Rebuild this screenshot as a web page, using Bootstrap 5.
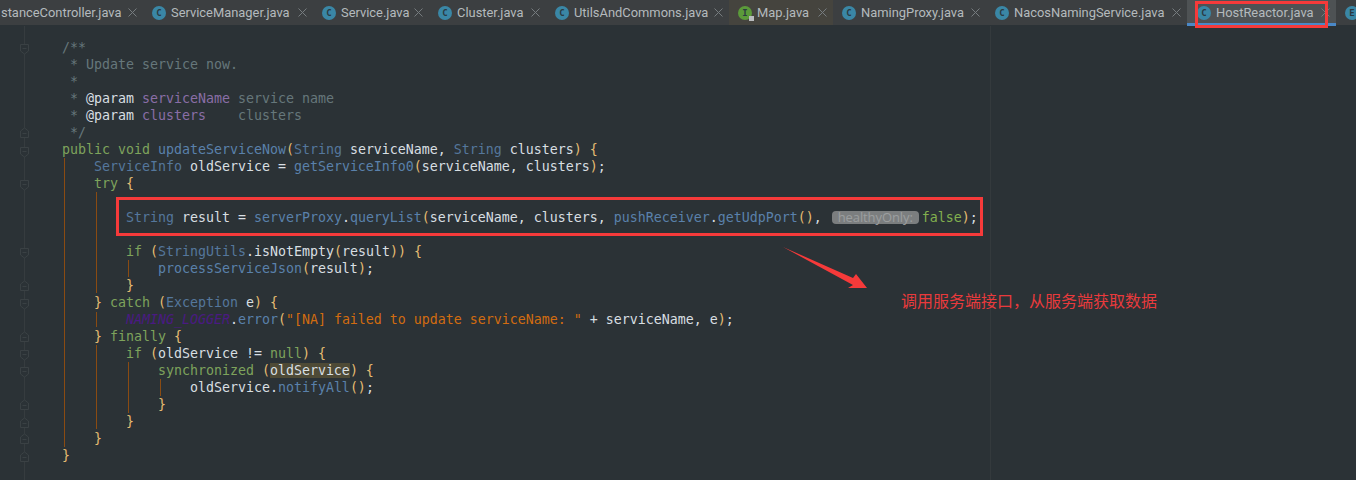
<!DOCTYPE html>
<html lang="en"><head><meta charset="utf-8">
<link href="https://cdn.jsdelivr.net/npm/bootstrap@5.3.0/dist/css/bootstrap.min.css" rel="stylesheet">
<style>
html,body{margin:0;width:1356px;height:480px;overflow:hidden;background:#2b3236}
.ide{position:relative;width:1356px;height:480px;overflow:hidden}
.tabbar{height:25px;background:#3c3f41;white-space:nowrap;font:12.9px/25px Roboto,"Noto Sans",sans-serif;color:#b4babd}
.tabx{height:25px;padding:0 6px 0 9px;flex:none}
.tabx:nth-child(1){width:143px;padding-left:1px}
.tabx:nth-child(2){width:170px}
.tabx:nth-child(3){width:116px}
.tabx:nth-child(4){width:117px}
.tabx:nth-child(5){width:183px}
.tabx:nth-child(6){width:104px}
.tabx:nth-child(7){width:153px}
.tabx:nth-child(8){width:201px}
.tabx:nth-child(9){width:149px}
.tabx:nth-child(10){width:60px}
.tabx.mapt{background:#45443e}
.tabx.act{background:#4e5254;box-shadow:inset 0 -3px 0 #4a88c7;padding-left:10px;height:26px;padding-bottom:1px}
.ico{width:14px;height:14px;flex:none;border-radius:50%;background:#3a87a6;color:#2b3a42;font:700 9px/14px "DejaVu Sans Mono",monospace;text-align:center;position:relative;margin-right:5px}
.ico.ifc{background:#5b9a3a}
.ico.ifc::after{content:"";position:absolute;right:-2px;bottom:-1px;width:5px;height:5px;background:#b9bcbe}
.tlabel{flex:1 1 auto;min-width:0}
.clsx{flex:none;display:block}
.gutter{width:62px;flex:none;height:455px}
.codeb{padding-top:14px;font:13.29px/17px "DejaVu Sans Mono",monospace;color:#d8dfe2;white-space:pre}
.ln{height:17px}
.cm{color:#66777b}.tg{color:#d8dfe2}.pn{color:#8a6ea6}.kw{color:#7ea35c}.ty{color:#55779c}.me{color:#5a81ab}
.br{color:#e6bd72}.st{color:#d26c10}.lg{color:#4a1a82;font-style:italic}.hl{background:#4e4a36}
.fa{color:#82b04e}
.hint{background:#7b7e7f;color:#9b9e9f;border-radius:4px;font:13px/13px "Open Sans",sans-serif;display:inline-block;width:87px;margin:0 3px 0 2px;text-align:center;letter-spacing:-.1px}
.over{position:absolute;left:0;top:0;pointer-events:none}
.note{position:absolute;left:901px;top:289px;color:#e93a3c;font:16px/22px "Noto Sans CJK SC",sans-serif;white-space:nowrap}
</style></head><body>
<div class="ide">
<svg width="0" height="0" class="position-absolute"><defs><path id="xm" d="M.5.5l8 8M8.5.5l-8 8" stroke="#767c7f" fill="none"/></defs></svg>
<div class="tabbar d-flex">
<div class="tabx d-flex align-items-center"><span class="tlabel">stanceController.java</span><svg class="clsx" width="9" height="9"><use href="#xm"/></svg></div>
<div class="tabx d-flex align-items-center"><span class="ico">C</span><span class="tlabel">ServiceManager.java</span><svg class="clsx" width="9" height="9"><use href="#xm"/></svg></div>
<div class="tabx d-flex align-items-center"><span class="ico">C</span><span class="tlabel">Service.java</span><svg class="clsx" width="9" height="9"><use href="#xm"/></svg></div>
<div class="tabx d-flex align-items-center"><span class="ico">C</span><span class="tlabel">Cluster.java</span><svg class="clsx" width="9" height="9"><use href="#xm"/></svg></div>
<div class="tabx d-flex align-items-center"><span class="ico">C</span><span class="tlabel">UtilsAndCommons.java</span><svg class="clsx" width="9" height="9"><use href="#xm"/></svg></div>
<div class="tabx mapt d-flex align-items-center"><span class="ico ifc">I</span><span class="tlabel">Map.java</span><svg class="clsx" width="9" height="9"><use href="#xm"/></svg></div>
<div class="tabx d-flex align-items-center"><span class="ico">C</span><span class="tlabel">NamingProxy.java</span><svg class="clsx" width="9" height="9"><use href="#xm"/></svg></div>
<div class="tabx d-flex align-items-center"><span class="ico">C</span><span class="tlabel">NacosNamingService.java</span><svg class="clsx" width="9" height="9"><use href="#xm"/></svg></div>
<div class="tabx act d-flex align-items-center"><span class="ico">C</span><span class="tlabel">HostReactor.java</span><svg class="clsx" width="9" height="9"><use href="#xm"/></svg></div>
<div class="tabx d-flex align-items-center"><span class="ico">E</span></div>
</div>
<div class="d-flex">
<div class="gutter"></div>
<div class="codeb"><div class="ln cm">/**</div><div class="ln cm"> * Update service now.</div><div class="ln cm"> *</div><div class="ln cm"> * <span class="tg">@param</span> <span class="pn">serviceName</span> service name</div><div class="ln cm"> * <span class="tg">@param</span> <span class="pn">clusters</span>    clusters</div><div class="ln cm"> */</div><div class="ln"><span class="kw">public void</span> <span class="me">updateServiceNow</span><span class="br">(</span><span class="ty">String</span> serviceName, <span class="ty">String</span> clusters<span class="br">) {</span></div><div class="ln">    <span class="ty">ServiceInfo</span> oldService = <span class="me">getServiceInfo0</span><span class="br">(</span>serviceName, clusters<span class="br">)</span>;</div><div class="ln">    <span class="kw">try</span> <span class="br">{</span></div><div class="ln"> </div><div class="ln">        <span class="ty">String</span> result = <span class="me">serverProxy</span>.<span class="me">queryList</span><span class="br">(</span>serviceName, clusters, <span class="me">pushReceiver</span>.<span class="me">getUdpPort</span><span class="br">()</span>, <span class="hint">healthyOnly:</span><span class="fa">false</span><span class="br">)</span>;</div><div class="ln"> </div><div class="ln">        <span class="kw">if</span> <span class="br">(</span><span class="ty">StringUtils</span>.isNotEmpty<span class="br">(</span>result<span class="br">)) {</span></div><div class="ln">            <span class="me">processServiceJson</span><span class="br">(</span>result<span class="br">)</span>;</div><div class="ln">        <span class="br">}</span></div><div class="ln">    <span class="br">}</span> <span class="kw">catch</span> <span class="br">(</span><span class="ty">Exception</span> e<span class="br">) {</span></div><div class="ln">        <span class="lg">NAMING_LOGGER</span>.<span class="me">error</span><span class="br">(</span><span class="st">"[NA] failed to update serviceName: "</span> + serviceName, e<span class="br">)</span>;</div><div class="ln">    <span class="br">}</span> <span class="kw">finally</span> <span class="br">{</span></div><div class="ln">        <span class="kw">if</span> <span class="br">(</span>oldService != <span class="kw">null</span><span class="br">) {</span></div><div class="ln">            <span class="kw">synchronized</span> <span class="br">(</span><span class="hl">oldService</span><span class="br">) {</span></div><div class="ln">                oldService.<span class="me">notifyAll</span><span class="br">()</span>;</div><div class="ln">            <span class="br">}</span></div><div class="ln">        <span class="br">}</span></div><div class="ln">    <span class="br">}</span></div><div class="ln"><span class="br">}</span></div></div>
</div>
<svg class="over" width="1356" height="480" viewBox="0 0 1356 480" fill="none">
<defs>
<g id="fdown"><path d="M20.5.5h8v6.5l-4 3-4-3z" fill="#2b3236"/><path d="M22.5 4.5h4"/></g>
<g id="fup"><path d="M20.5 9.5h8V3l-4-3-4 3z" fill="#2b3236"/><path d="M22.5 5.5h4"/></g>
</defs>
<path d="M24.5 26V480" stroke="#363c3f"/>
<path d="M990.5 26V480" stroke="#343a3d"/>
<g stroke="#3a4144">
<use href="#fdown" y="44"/><use href="#fdown" y="147"/><use href="#fdown" y="180"/><use href="#fdown" y="248"/><use href="#fdown" y="299"/><use href="#fdown" y="350"/><use href="#fdown" y="367"/>
<use href="#fup" y="128"/><use href="#fup" y="281"/><use href="#fup" y="332"/><use href="#fup" y="400"/><use href="#fup" y="418"/><use href="#fup" y="434"/><use href="#fup" y="452"/>
</g>
<g stroke="#8a4b12">
<path d="M64.5 158V447M96.5 192V293M96.5 312V327M96.5 345V429M128.5 260V277M128.5 362V413M160.5 379V396"/>
</g>
<path d="M783 247L853 278L856 274L867 288L848 288L853 285Z" fill="#f63a3a"/>
<rect x="117.5" y="198.5" width="864" height="36" stroke="#f63a3a" stroke-width="3"/>
<rect x="1196.5" y="2.5" width="130" height="24" stroke="#f63a3a" stroke-width="3"/>
</svg>
<div class="note">调用服务端接口，从服务端获取数据</div>
</div>
</body></html>
